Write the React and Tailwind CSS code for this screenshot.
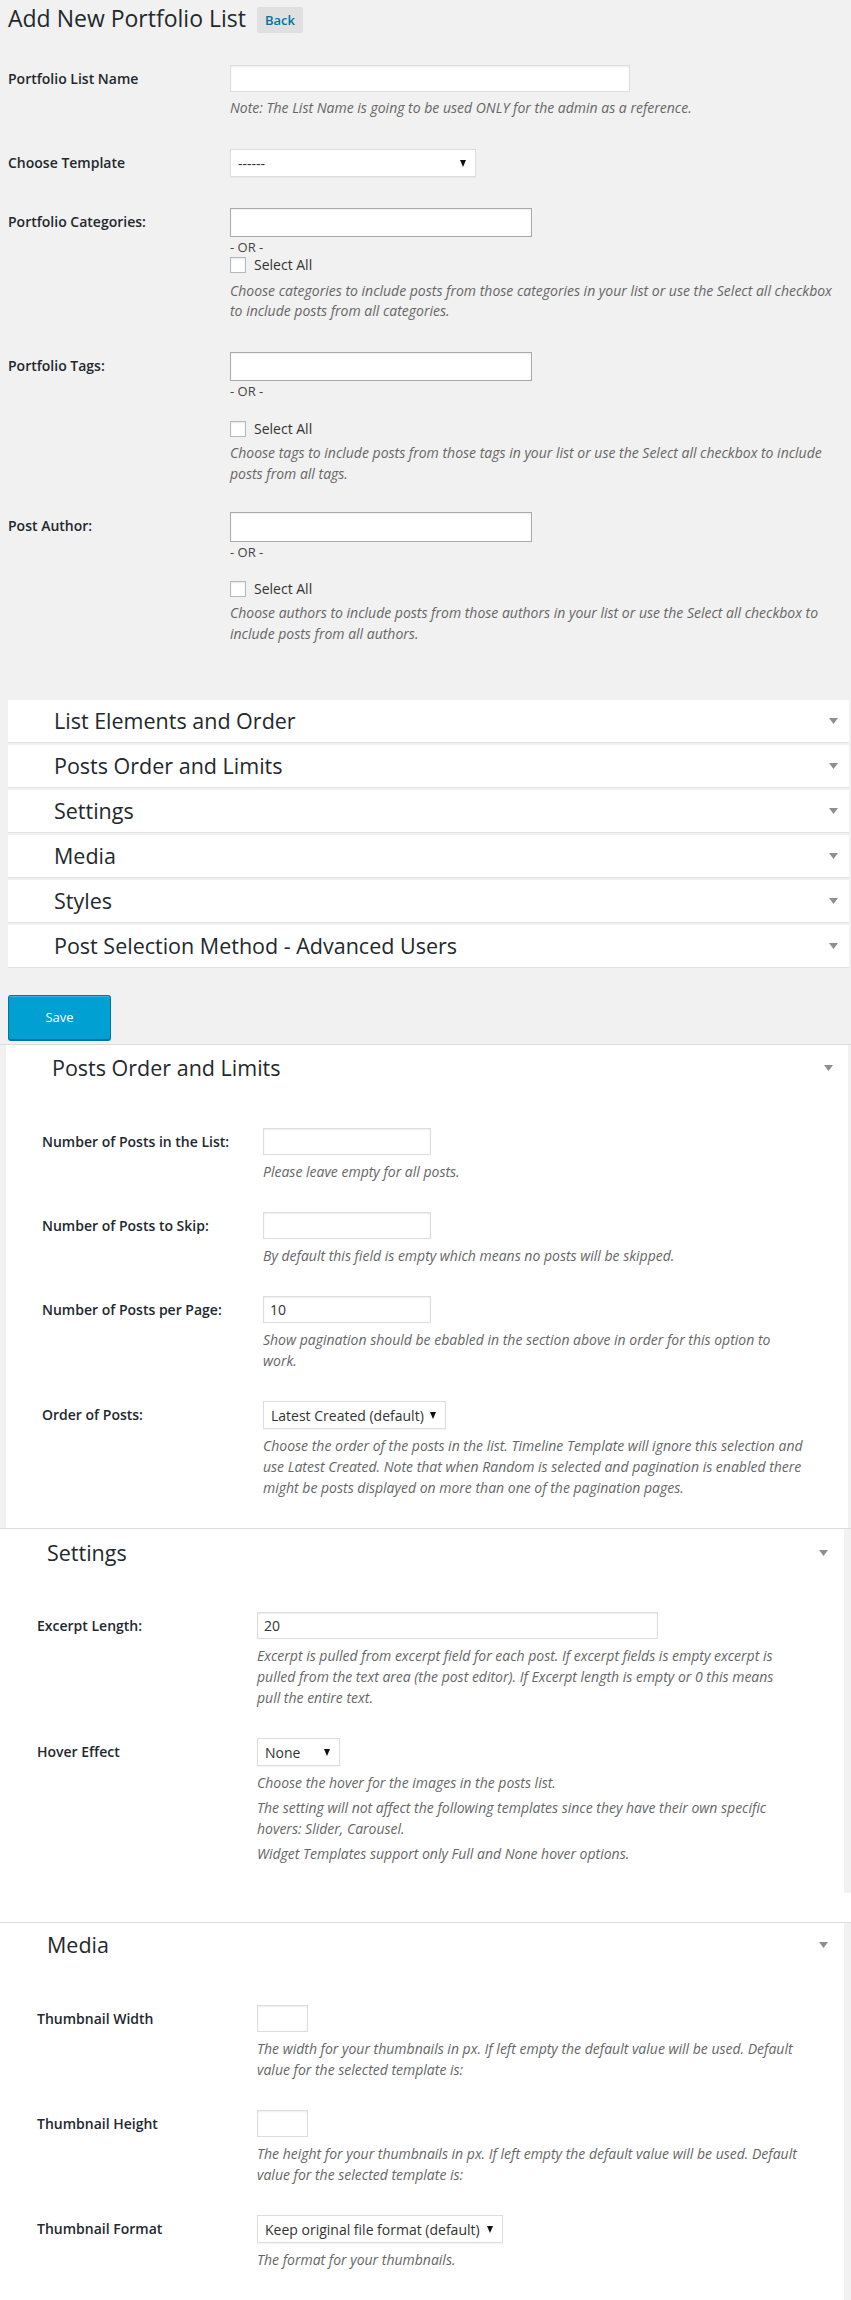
import React from 'react';

const Arrow = () => (
    <svg width="9" height="6" viewBox="0 0 9 6" className="shrink-0">
        <polygon points="0,0 9,0 4.5,6" fill="#8c8f94" />
    </svg>
);

const SelectArrow = () => (
    <svg width="6" height="7" viewBox="0 0 6 7" className="shrink-0">
        <polygon points="0,0 6,0 3,7" fill="#111" />
    </svg>
);

const TextInput = ({ w, value, dark, h = 'h-[27px]' }) => (
    <div className={`${w} ${h} bg-white border ${dark ? 'border-[#aaa]' : 'border-[#ddd]'} shadow-[inset_0_1px_2px_rgba(0,0,0,0.07)] flex items-center px-[6px] text-[14px] text-[#333]`}>
        {value}
    </div>
);

const Select = ({ w, value }) => (
    <div className={`${w} h-[28px] bg-white border border-[#ddd] shadow-[0_1px_1px_rgba(0,0,0,0.04)] flex items-center justify-between pl-[7px] pr-[9px] text-[14px] text-[#333]`}>
        <span className="whitespace-nowrap">{value}</span>
        <SelectArrow />
    </div>
);

const Desc = ({ children, lh = 'leading-[21px]', className = '' }) => (
    <p className={`text-[14px] italic ${lh} text-[#666] ${className}`}>{children}</p>
);

const Checkbox = ({ className = '' }) => (
    <div className={`flex items-center gap-[8px] ${className}`}>
        <div className="w-[16px] h-[16px] bg-white border border-[#b4b9be] shadow-[inset_0_1px_2px_rgba(0,0,0,0.1)]" />
        <span className="text-[14px] leading-[16px] text-[#333]">Select All</span>
    </div>
);

const Or = () => <div className="text-[13px] leading-[20px] text-[#444]">- OR -</div>;

const Row = ({ label, labelW, className = '', children }) => (
    <div className={`flex items-start ${className}`}>
        <div className={`${labelW} shrink-0 h-[27px] flex items-center text-[14px] font-semibold text-[#23282d]`}>{label}</div>
        <div className="flex-1 min-w-0">{children}</div>
    </div>
);

const PanelTitle = ({ title, className = '' }) => (
    <div className={`flex items-center justify-between h-[28px] ${className}`}>
        <h3 className="text-[21.5px] leading-[28px] text-[#23282d]">{title}</h3>
        <Arrow />
    </div>
);

const accordionItems = [
    'List Elements and Order',
    'Posts Order and Limits',
    'Settings',
    'Media',
    'Styles',
    'Post Selection Method - Advanced Users',
];

export default function App() {
    return (
        <div className="w-[851px] h-[2300px] overflow-hidden bg-[#f1f1f1] font-['Open_Sans',sans-serif] text-[#23282d]">
            {/* Header */}
            <div className="pl-[8px] pt-[4px] flex items-start">
                <h1 className="text-[23px] leading-[29px] font-normal text-[#23282d]">Add New Portfolio List</h1>
                <button className="ml-[11px] mt-[3px] px-[8px] py-[4px] bg-[#e0e0e0] rounded-[2px] text-[13px] leading-[18px] font-semibold text-[#0074a2]">Back</button>
            </div>

            {/* Main form */}
            <div className="pl-[8px] pr-[10px]">
                <Row label="Portfolio List Name" labelW="w-[222px]" className="mt-[32px]">
                    <TextInput w="w-[400px]" />
                    <Desc lh="leading-[20px]" className="mt-[6px]">Note: The List Name is going to be used ONLY for the admin as a reference.</Desc>
                </Row>

                <Row label="Choose Template" labelW="w-[222px]" className="mt-[31px]">
                    <Select w="w-[246px]" value="------" />
                </Row>

                <Row label="Portfolio Categories:" labelW="w-[222px]" className="mt-[31px]">
                    <TextInput w="w-[302px]" h="h-[29px]" dark />
                    <Or />
                    <Checkbox />
                    <Desc lh="leading-[20px]" className="mt-[8px] max-w-[608px]">Choose categories to include posts from those categories in your list or use the Select all checkbox to include posts from all categories.</Desc>
                </Row>

                <Row label="Portfolio Tags:" labelW="w-[222px]" className="mt-[31px]">
                    <TextInput w="w-[302px]" h="h-[29px]" dark />
                    <Or />
                    <Checkbox className="mt-[20px]" />
                    <Desc className="mt-[5px] max-w-[608px]">Choose tags to include posts from those tags in your list or use the Select all checkbox to include posts from all tags.</Desc>
                </Row>

                <Row label="Post Author:" labelW="w-[222px]" className="mt-[28px]">
                    <TextInput w="w-[302px]" h="h-[30px]" dark />
                    <Or />
                    <Checkbox className="mt-[19px]" />
                    <Desc className="mt-[5px] max-w-[608px]">Choose authors to include posts from those authors in your list or use the Select all checkbox to include posts from all authors.</Desc>
                </Row>
            </div>

            {/* Accordion */}
            <div className="ml-[8px] w-[841px] mt-[56px]">
                {accordionItems.map((item) => (
                    <div key={item} className="h-[43px] mb-[2px] bg-white border-b border-[#e2e2e2] flex items-center justify-between pl-[46px] pr-[11px]">
                        <span className="text-[21.5px] leading-[28px] text-[#23282d]">{item}</span>
                        <Arrow />
                    </div>
                ))}
            </div>

            <div className="pl-[8px] mt-[27px]">
                <button className="w-[103px] h-[46px] bg-[#00a0d2] border border-[#0073aa] border-b-2 rounded-[3px] text-white text-[13px] shadow-[inset_0_1px_0_rgba(120,200,230,0.5)]">Save</button>
            </div>

            {/* Posts Order and Limits */}
            <div className="mt-[3px] border-t border-[#dcdcdc]">
                <div className="ml-[6px] w-[842px] bg-white pt-[9px] pb-[30px]">
                    <PanelTitle title="Posts Order and Limits" className="pl-[46px] pr-[15px]" />
                    <div className="pl-[36px] pr-[40px]">
                        <Row label="Number of Posts in the List:" labelW="w-[221px]" className="mt-[46px]">
                            <TextInput w="w-[168px]" />
                            <Desc className="mt-[6px]">Please leave empty for all posts.</Desc>
                        </Row>
                        <Row label="Number of Posts to Skip:" labelW="w-[221px]" className="mt-[30px]">
                            <TextInput w="w-[168px]" />
                            <Desc className="mt-[6px]">By default this field is empty which means no posts will be skipped.</Desc>
                        </Row>
                        <Row label="Number of Posts per Page:" labelW="w-[221px]" className="mt-[30px]">
                            <TextInput w="w-[168px]" value="10" />
                            <Desc className="mt-[6px] max-w-[540px]">Show pagination should be ebabled in the section above in order for this option to work.</Desc>
                        </Row>
                        <Row label="Order of Posts:" labelW="w-[221px]" className="mt-[30px]">
                            <Select w="w-[183px]" value="Latest Created (default)" />
                            <Desc className="mt-[6px] max-w-[540px]">Choose the order of the posts in the list. Timeline Template will ignore this selection and use Latest Created. Note that when Random is selected and pagination is enabled there might be posts displayed on more than one of the pagination pages.</Desc>
                        </Row>
                    </div>
                </div>
            </div>

            {/* Settings */}
            <div className="border-t border-[#dcdcdc]">
                <div className="w-[844px] bg-white pt-[10px] pb-[29px]">
                    <PanelTitle title="Settings" className="pl-[47px] pr-[16px]" />
                    <div className="pl-[37px] pr-[40px]">
                        <Row label="Excerpt Length:" labelW="w-[220px]" className="mt-[45px]">
                            <TextInput w="w-[401px]" value="20" />
                            <Desc className="mt-[6px] max-w-[535px]">Excerpt is pulled from excerpt field for each post. If excerpt fields is empty excerpt is pulled from the text area (the post editor). If Excerpt length is empty or 0 this means pull the entire text.</Desc>
                        </Row>
                        <Row label="Hover Effect" labelW="w-[220px]" className="mt-[30px]">
                            <Select w="w-[83px]" value="None" />
                            <Desc className="mt-[6px]">Choose the hover for the images in the posts list.</Desc>
                            <Desc className="mt-[4px] max-w-[535px]">The setting will not affect the following templates since they have their own specific hovers: Slider, Carousel.</Desc>
                            <Desc className="mt-[4px]">Widget Templates support only Full and None hover options.</Desc>
                        </Row>
                    </div>
                </div>
            </div>

            <div className="h-[29px] bg-white" />

            {/* Media */}
            <div className="border-t border-[#dcdcdc]">
                <div className="w-[844px] bg-white pt-[8px] pb-[120px]">
                    <PanelTitle title="Media" className="pl-[47px] pr-[16px]" />
                    <div className="pl-[37px] pr-[40px]">
                        <Row label="Thumbnail Width" labelW="w-[220px]" className="mt-[46px]">
                            <TextInput w="w-[51px]" />
                            <Desc className="mt-[6px] max-w-[545px]">The width for your thumbnails in px. If left empty the default value will be used. Default value for the selected template is:</Desc>
                        </Row>
                        <Row label="Thumbnail Height" labelW="w-[220px]" className="mt-[30px]">
                            <TextInput w="w-[51px]" />
                            <Desc className="mt-[6px] max-w-[545px]">The height for your thumbnails in px. If left empty the default value will be used. Default value for the selected template is:</Desc>
                        </Row>
                        <Row label="Thumbnail Format" labelW="w-[220px]" className="mt-[30px]">
                            <Select w="w-[246px]" value="Keep original file format (default)" />
                            <Desc className="mt-[6px]">The format for your thumbnails.</Desc>
                        </Row>
                    </div>
                </div>
            </div>
        </div>
    );
}
